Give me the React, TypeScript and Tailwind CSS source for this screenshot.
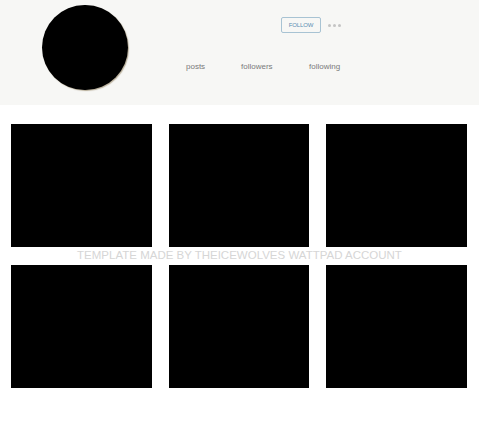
export default function App() {
  const tiles = [0, 1, 2, 3, 4, 5];

  return (
    <div className="w-[479px] h-[422px] bg-white overflow-hidden font-['Liberation_Sans',sans-serif]">
      {/* Profile header */}
      <div className="h-[105px] bg-[#f7f7f5] flex">
        <div className="pl-[42px] pt-[5px]">
          <div className="w-[86px] h-[85px] rounded-full bg-black shadow-[1px_1px_1px_rgba(120,100,60,0.5)]" />
        </div>
        <div className="flex flex-col pl-[58px]">
          <div className="flex items-center mt-[17px] ml-[95px] gap-[7px]">
            <div className="w-[40px] h-[16px] border border-[#a8c3d3] rounded-[2px] flex items-center justify-center text-[6px] text-[#5b8db2] tracking-tight">
              FOLLOW
            </div>
            <div className="flex gap-[2px]">
              <span className="w-[3px] h-[3px] rounded-full bg-[#c4c4c4]" />
              <span className="w-[3px] h-[3px] rounded-full bg-[#c4c4c4]" />
              <span className="w-[3px] h-[3px] rounded-full bg-[#c4c4c4]" />
            </div>
          </div>
          <div className="flex mt-[30px] text-[8px] text-[#7a7a7a] leading-none">
            <span className="w-[55px]">posts</span>
            <span className="w-[68px]">followers</span>
            <span>following</span>
          </div>
        </div>
      </div>

      {/* Photo grid */}
      <div className="pl-[11px] pr-[12px] pt-[19px]">
        <div className="grid grid-cols-3 gap-x-[17px] gap-y-[18px]">
          {tiles.map((t) => (
            <div key={t} className="h-[123px] bg-black" />
          ))}
        </div>
      </div>

      <div className="-mt-[141px] h-[18px] flex items-center justify-center text-[11.5px] font-light text-[#d6d6d6] leading-none relative">
        TEMPLATE MADE BY THEICEWOLVES WATTPAD ACCOUNT
      </div>
    </div>
  );
}
